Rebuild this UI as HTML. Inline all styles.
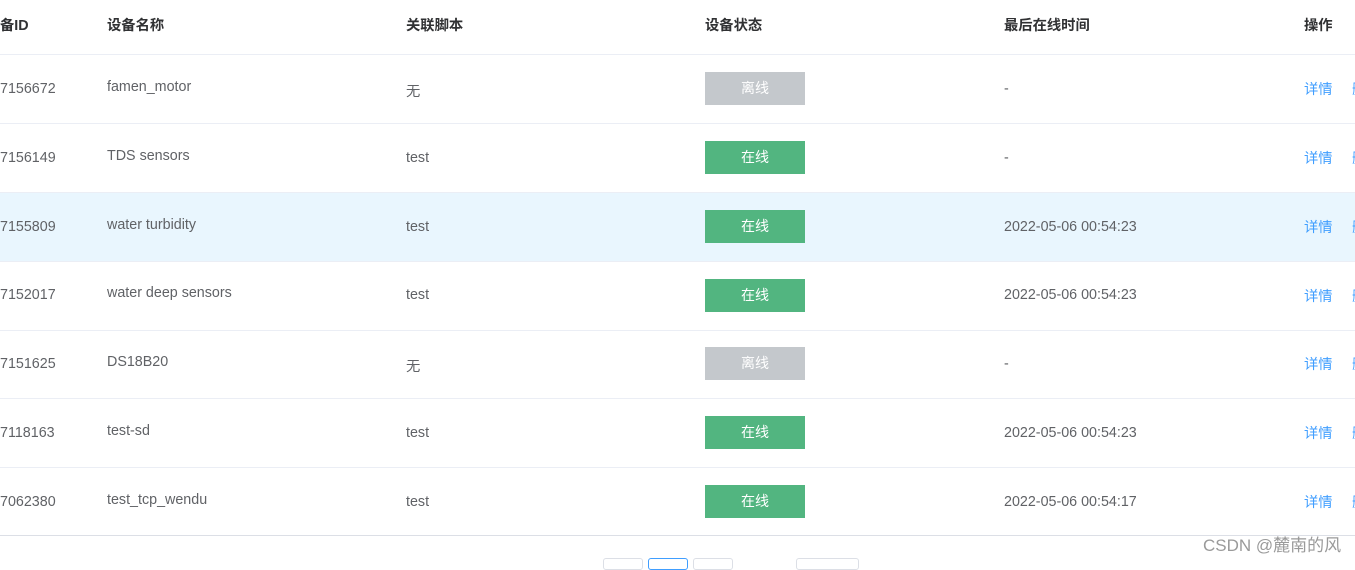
<!DOCTYPE html><html><head><meta charset="utf-8"><style>
body{margin:0;width:1355px;height:562px;overflow:hidden;background:#fff;font-family:"Liberation Sans","Noto Sans CJK SC",sans-serif;font-size:14.3px;color:#606266;position:relative}
.a{position:absolute;white-space:nowrap;margin-top:1px}
.h{font-weight:bold;color:#303133;top:13px}
.line{position:absolute;left:0;width:1355px;height:1px;background:#ebeef5}
.b{position:absolute;left:705px;width:100px;height:33px;line-height:33px;text-align:center;color:#fff;font-size:14px}
.on{background:#52b580}.off{background:#c4c8cc}
.lk{color:#409eff;margin-top:0}
.pg{position:absolute;top:558px;height:10px;border:1px solid #dcdfe6;border-radius:3px}
</style></head><body>
<div class="a h" style="left:0">备ID</div>
<div class="a h" style="left:107px">设备名称</div>
<div class="a h" style="left:406px">关联脚本</div>
<div class="a h" style="left:705px">设备状态</div>
<div class="a h" style="left:1004px">最后在线时间</div>
<div class="a h" style="left:1304px">操作</div>
<div class="line" style="top:54px"></div>
<div style="position:absolute;left:0;top:193px;width:1355px;height:68px;background:#e9f6fe"></div>
<div class="a" style="left:0;top:80px">7156672</div><div class="a" style="left:107px;top:78px">famen_motor</div><div class="a" style="left:406px;top:79px">无</div><div class="b off" style="top:72px">离线</div><div class="a" style="left:1004px;top:80px">-</div><div class="a lk" style="left:1304px;top:78px">详情</div><div class="a lk" style="left:1352px;top:78px">删</div>
<div class="line" style="top:123px"></div>
<div class="a" style="left:0;top:149px">7156149</div><div class="a" style="left:107px;top:147px">TDS sensors</div><div class="a" style="left:406px;top:149px">test</div><div class="b on" style="top:141px">在线</div><div class="a" style="left:1004px;top:149px">-</div><div class="a lk" style="left:1304px;top:147px">详情</div><div class="a lk" style="left:1352px;top:147px">删</div>
<div class="line" style="top:192px"></div>
<div class="a" style="left:0;top:218px">7155809</div><div class="a" style="left:107px;top:216px">water turbidity</div><div class="a" style="left:406px;top:218px">test</div><div class="b on" style="top:210px">在线</div><div class="a" style="left:1004px;top:218px">2022-05-06 00:54:23</div><div class="a lk" style="left:1304px;top:216px">详情</div><div class="a lk" style="left:1352px;top:216px">删</div>
<div class="line" style="top:261px"></div>
<div class="a" style="left:0;top:286px">7152017</div><div class="a" style="left:107px;top:284px">water deep sensors</div><div class="a" style="left:406px;top:286px">test</div><div class="b on" style="top:279px">在线</div><div class="a" style="left:1004px;top:286px">2022-05-06 00:54:23</div><div class="a lk" style="left:1304px;top:285px">详情</div><div class="a lk" style="left:1352px;top:285px">删</div>
<div class="line" style="top:330px"></div>
<div class="a" style="left:0;top:355px">7151625</div><div class="a" style="left:107px;top:353px">DS18B20</div><div class="a" style="left:406px;top:354px">无</div><div class="b off" style="top:347px">离线</div><div class="a" style="left:1004px;top:355px">-</div><div class="a lk" style="left:1304px;top:353px">详情</div><div class="a lk" style="left:1352px;top:353px">删</div>
<div class="line" style="top:398px"></div>
<div class="a" style="left:0;top:424px">7118163</div><div class="a" style="left:107px;top:422px">test-sd</div><div class="a" style="left:406px;top:424px">test</div><div class="b on" style="top:416px">在线</div><div class="a" style="left:1004px;top:424px">2022-05-06 00:54:23</div><div class="a lk" style="left:1304px;top:422px">详情</div><div class="a lk" style="left:1352px;top:422px">删</div>
<div class="line" style="top:467px"></div>
<div class="a" style="left:0;top:493px">7062380</div><div class="a" style="left:107px;top:491px">test_tcp_wendu</div><div class="a" style="left:406px;top:493px">test</div><div class="b on" style="top:485px">在线</div><div class="a" style="left:1004px;top:493px">2022-05-06 00:54:17</div><div class="a lk" style="left:1304px;top:491px">详情</div><div class="a lk" style="left:1352px;top:491px">删</div>
<div class="line" style="top:535px;background:#dcdfe6"></div>
<div class="pg" style="left:603px;width:38px"></div>
<div class="pg" style="left:648px;width:38px;border-color:#409eff"></div>
<div class="pg" style="left:693px;width:38px"></div>
<div class="pg" style="left:796px;width:61px"></div>
<div class="a" style="left:1203px;top:530px;font-size:17px;color:#9a9a9a">CSDN @麓南的风</div>
</body></html>
